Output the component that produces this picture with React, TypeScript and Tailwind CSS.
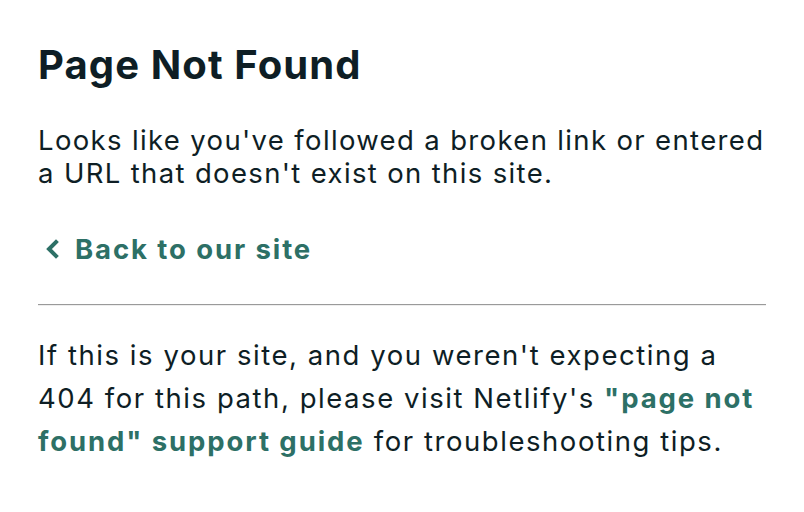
export default function App() {
  return (
    <div className="w-[804px] h-[512px] bg-white overflow-hidden" style={{ fontFamily: 'Inter, "Noto Sans", sans-serif' }}>
      <div className="pl-[38px] pr-[34px] pt-[40px] text-[#0e1e25]">
        <h1 className="text-[40px] leading-[50px] font-bold tracking-[1.1px]">Page Not Found</h1>
        <p className="mt-[34px] text-[27.5px] leading-[33px] tracking-[1.35px]">
          Looks like you've followed a broken link or entered a URL that doesn't exist on this site.
        </p>
        <a className="mt-[43px] flex items-center gap-[12px] text-[27.5px] leading-[32px] font-bold tracking-[1.9px] text-[#2d7066]">
          <svg width="20" height="20" viewBox="0 0 20 20" className="ml-[5px]">
            <path d="M13 3 L6 10 L13 17" fill="none" stroke="#2d7066" strokeWidth="4" strokeLinecap="square" />
          </svg>
          Back to our site
        </a>
        <div className="mt-[39px] mr-[4px] border-t border-t-[#9a9a9a] border-b border-b-[#eeeeee]" />
        <p className="mt-[28px] pr-[4px] text-[27.5px] leading-[43px] tracking-[1.55px]">
          If this is your site, and you weren't expecting a 404 for this path, please visit Netlify's{" "}
          <a className="font-bold text-[#2d7066] tracking-[1.9px]">"page not found" support guide</a> for troubleshooting tips.
        </p>
      </div>
    </div>
  );
}
